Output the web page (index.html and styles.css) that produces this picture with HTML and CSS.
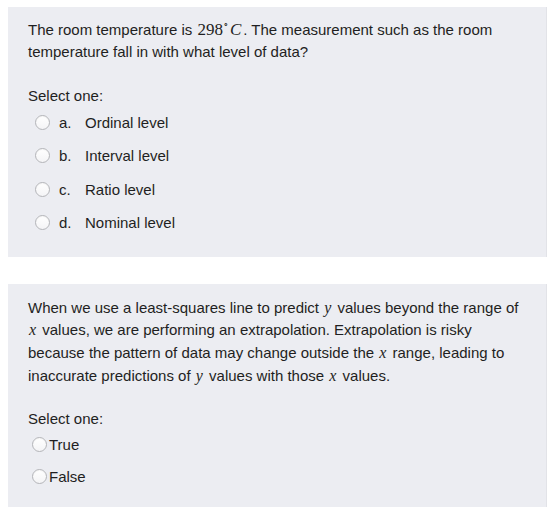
FILE: index.html
```html
<!DOCTYPE html>
<html>
<head>
<meta charset="utf-8">
<link rel="stylesheet" href="styles.css">
</head>
<body>
<div class="que">
  <div class="formulation first">
    <div class="qtext">The room temperature is <span class="math">298<sup class="deg">∘</sup><i>C</i></span>. The measurement such as the room temperature fall in with what level of data?</div>
    <div class="ablock">
      <div class="prompt">Select one:</div>
      <div class="answer lettered">
        <label class="opt"><span class="radio"></span><span class="letter">a.</span><span class="label">Ordinal level</span></label>
        <label class="opt"><span class="radio"></span><span class="letter">b.</span><span class="label">Interval level</span></label>
        <label class="opt"><span class="radio"></span><span class="letter">c.</span><span class="label">Ratio level</span></label>
        <label class="opt"><span class="radio"></span><span class="letter">d.</span><span class="label">Nominal level</span></label>
      </div>
    </div>
  </div>
</div>
<div class="que">
  <div class="formulation second">
    <div class="qtext">When we use a least-squares line to predict <i class="mv">y</i> values beyond the range of <i class="mv">x</i> values, we are performing an extrapolation. Extrapolation is risky because the pattern of data may change outside the <i class="mv">x</i> range, leading to inaccurate predictions of <i class="mv">y</i> values with those <i class="mv">x</i> values.</div>
    <div class="ablock">
      <div class="prompt">Select one:</div>
      <div class="answer tf">
        <label class="opt"><span class="radio"></span><span class="label">True</span></label>
        <label class="opt"><span class="radio"></span><span class="label">False</span></label>
      </div>
    </div>
  </div>
</div>
</body>
</html>
```
FILE: styles.css
```css
html, body {
  background: #ffffff;
}
body {
  margin: 7px 4px 0 8px;
  font-family: "Liberation Sans", Arial, sans-serif;
  font-size: 15px;
  color: #1f1f22;
}
.que {
  margin-bottom: 27px;
}
.formulation {
  background: #ecedf2;
  border-right: 1px solid #e2e3e8;
  padding: 12px 20px 0 20px;
}
.formulation.first {
  padding-bottom: 19px;
}
.formulation.second {
  padding-top: 13px;
  padding-bottom: 17px;
}
.qtext {
  line-height: 22.7px;
}
.first .qtext {
  line-height: 22px;
}
.math {
  font-family: "Liberation Serif", "Times New Roman", serif;
  font-size: 17px;
  padding-left: 1px;
}
.math i {
  margin-left: 1px;
  margin-right: 2px;
}
.deg {
  font-size: 9px;
  vertical-align: 7px;
  line-height: 8px;
}
.mv {
  font-family: "Liberation Serif", "Times New Roman", serif;
  font-size: 16px;
  padding-left: 1px;
  padding-right: 2px;
}
.ablock {
  margin-top: 22px;
}
.second .ablock {
  margin-top: 21px;
}
.prompt {
  line-height: 22px;
}
.answer {
  display: flex;
  flex-direction: column;
}
.lettered {
  gap: 3.5px;
}
.lettered .opt {
  height: 30px;
  display: flex;
  align-items: center;
  padding-left: 7px;
}
.tf {
  gap: 4px;
}
.tf .opt {
  height: 28px;
  display: flex;
  align-items: center;
  padding-left: 4px;
}
.radio {
  width: 13px;
  height: 13px;
  border-radius: 50%;
  border: 1px solid #b4b5b9;
  background: linear-gradient(#ffffff, #f4f4f6);
  box-shadow: inset 0 1px 1px rgba(0,0,0,0.04);
  flex: none;
}
.lettered .letter {
  margin-left: 9px;
  width: 26px;
}
.tf .label {
  margin-left: 2px;
}
```
